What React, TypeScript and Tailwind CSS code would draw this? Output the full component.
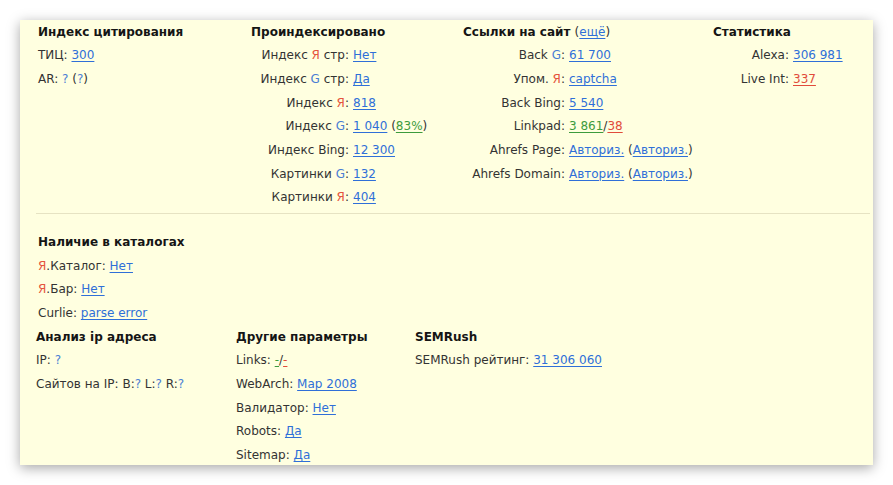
import React from 'react';

const font = { fontFamily: '"DejaVu Sans", Verdana, sans-serif' };

const Y = () => <span className="text-[#e5533d]">Я</span>;
const G = () => <span className="text-[#4a7ed4]">G</span>;

const A = ({ children, color = 'blue' }: { children: React.ReactNode; color?: 'blue' | 'green' | 'red' }) => {
  const cls =
    color === 'green' ? 'text-[#3d9b3d]' : color === 'red' ? 'text-[#e14b3b]' : 'text-[#2f6fd8]';
  return <a className={`${cls} underline underline-offset-2 decoration-1 cursor-pointer`}>{children}</a>;
};

const Q = () => <span className="text-[#4a7ed4]">?</span>;

interface Row {
  label: React.ReactNode;
  value: React.ReactNode;
}

const KeyTable = ({ rows, labelWidth }: { rows: Row[]; labelWidth: string }) => (
  <div className="flex flex-col">
    {rows.map((r, i) => (
      <div key={i} className="flex h-[23.67px] items-center">
        <span className={`${labelWidth} shrink-0 text-right whitespace-nowrap`}>{r.label}:</span>
        <span className="pl-[4px] whitespace-nowrap">{r.value}</span>
      </div>
    ))}
  </div>
);

const Line = ({ children }: { children: React.ReactNode }) => (
  <div className="h-[23.67px] flex items-center whitespace-nowrap">
    <span>{children}</span>
  </div>
);

const Head = ({ children }: { children: React.ReactNode }) => (
  <div className="h-[23.67px] flex items-center font-bold text-[#151515] whitespace-nowrap">
    <span>{children}</span>
  </div>
);

export default function App() {
  return (
    <div className="w-[893px] h-[485px] bg-white overflow-hidden pt-[20px] pl-[20px]" style={font}>
      <div className="w-[853px] h-[445px] bg-[#ffffe0] shadow-[0_3px_12px_rgba(0,0,0,0.35)] overflow-hidden pl-[16px] pr-[3px] text-[12px] text-[#333]">
        <div className="flex pl-[2px]">
          <div className="w-[213px]">
            <Head>Индекс цитирования</Head>
            <Line>
              ТИЦ: <A>300</A>
            </Line>
            <Line>
              AR: <Q /> (<Q />)
            </Line>
          </div>
          <div className="w-[212px]">
            <Head>Проиндексировано</Head>
            <KeyTable
              labelWidth="w-[98px]"
              rows={[
                { label: <>Индекс <Y /> стр</>, value: <A>Нет</A> },
                { label: <>Индекс <G /> стр</>, value: <A>Да</A> },
                { label: <>Индекс <Y /></>, value: <A>818</A> },
                {
                  label: <>Индекс <G /></>,
                  value: (
                    <>
                      <A>1 040</A> (<A color="green">83%</A>)
                    </>
                  ),
                },
                { label: 'Индекс Bing', value: <A>12 300</A> },
                { label: <>Картинки <G /></>, value: <A>132</A> },
                { label: <>Картинки <Y /></>, value: <A>404</A> },
              ]}
            />
          </div>
          <div className="w-[250px]">
            <Head>
              Ссылки на сайт <span className="font-normal text-[#333]">(<A>ещё</A>)</span>
            </Head>
            <KeyTable
              labelWidth="w-[102px]"
              rows={[
                { label: <>Back <G /></>, value: <A>61 700</A> },
                { label: <>Упом. <Y /></>, value: <A>captcha</A> },
                { label: 'Back Bing', value: <A>5 540</A> },
                {
                  label: 'Linkpad',
                  value: (
                    <>
                      <A color="green">3 861</A>/<A color="red">38</A>
                    </>
                  ),
                },
                {
                  label: 'Ahrefs Page',
                  value: (
                    <>
                      <A>Авториз.</A> (<A>Авториз.</A>)
                    </>
                  ),
                },
                {
                  label: 'Ahrefs Domain',
                  value: (
                    <>
                      <A>Авториз.</A> (<A>Авториз.</A>)
                    </>
                  ),
                },
              ]}
            />
          </div>
          <div className="flex-1">
            <Head>Статистика</Head>
            <KeyTable
              labelWidth="w-[76px]"
              rows={[
                { label: 'Alexa', value: <A>306 981</A> },
                { label: 'Live Int', value: <A color="red">337</A> },
              ]}
            />
          </div>
        </div>

        <div className="h-px bg-[#e6e3c3] mt-[4px] mb-[16px]" />

        <div className="pl-[2px]">
          <Head>Наличие в каталогах</Head>
          <Line>
            <Y />.Каталог: <A>Нет</A>
          </Line>
          <Line>
            <Y />.Бар: <A>Нет</A>
          </Line>
          <Line>
            Curlie: <A>parse error</A>
          </Line>
        </div>

        <div className="flex">
          <div className="w-[200px]">
            <Head>Анализ ip адреса</Head>
            <Line>
              IP: <Q />
            </Line>
            <Line>
              Сайтов на IP: B:<Q /> L:<Q /> R:<Q />
            </Line>
          </div>
          <div className="w-[179px]">
            <Head>Другие параметры</Head>
            <Line>
              Links: <A color="green">-</A>/<A color="red">-</A>
            </Line>
            <Line>
              WebArch: <A>Мар 2008</A>
            </Line>
            <Line>
              Валидатор: <A>Нет</A>
            </Line>
            <Line>
              Robots: <A>Да</A>
            </Line>
            <Line>
              Sitemap: <A>Да</A>
            </Line>
          </div>
          <div className="flex-1">
            <Head>SEMRush</Head>
            <Line>
              SEMRush рейтинг: <A>31 306 060</A>
            </Line>
          </div>
        </div>
      </div>
    </div>
  );
}
